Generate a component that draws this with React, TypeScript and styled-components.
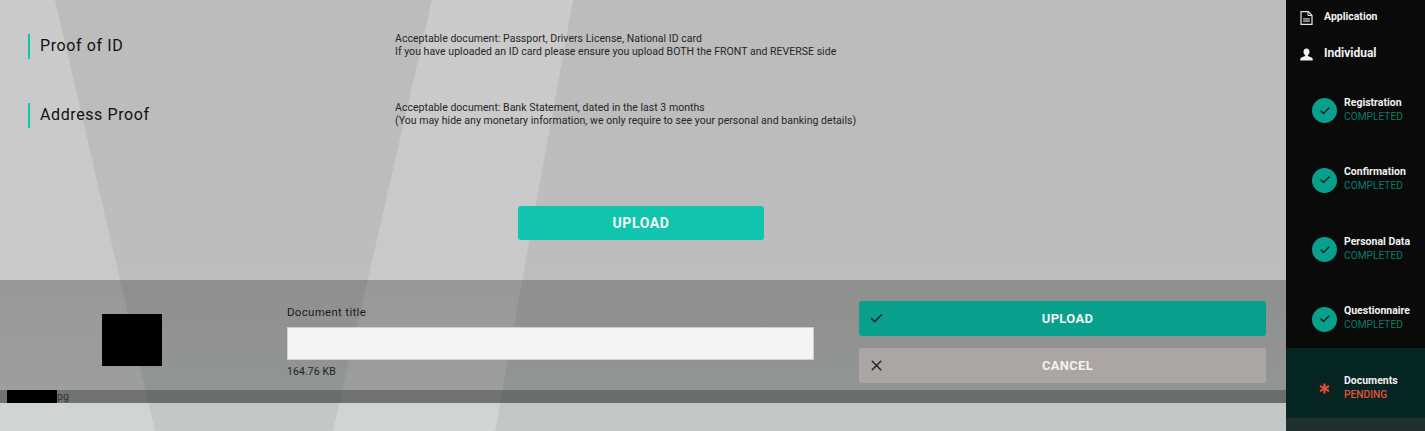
import React from "react";
import styled, { createGlobalStyle } from "styled-components";
import { Check, X, Asterisk } from "lucide-react";

const Global = createGlobalStyle`
  html, body { margin: 0; padding: 0; height: 431px; overflow: hidden; font-family: Roboto, "Liberation Sans", sans-serif; }
`;

const Page = styled.div`
  display: flex;
  width: 1425px;
  height: 431px;
  overflow: hidden;
`;

const Main = styled.main`
  position: relative;
  flex: 1;
  display: flex;
  flex-direction: column;
  background: linear-gradient(180deg, #cbcbcb 0%, #c9c9c9 62%, #d1d6d5 100%);
  overflow: hidden;
`;

const Shape = styled.div<{ $clip: string }>`
  position: absolute;
  inset: 0;
  background: linear-gradient(180deg, #bcbcbc 0%, #bdbdbd 62%, #c3c9c8 100%);
  clip-path: polygon(${(p) => p.$clip});
`;

const Content = styled.div`
  position: relative;
  display: flex;
  flex-direction: column;
  height: 100%;
`;

const Docs = styled.section`
  display: flex;
  flex-direction: column;
  gap: 44px;
  padding: 34px 0 0 28px;
`;

const DocRow = styled.div`
  display: flex;
  align-items: center;
  height: 25px;
`;

const DocTitle = styled.h2`
  width: 367px;
  margin: 0;
  padding-left: 10px;
  border-left: 2.5px solid #10c4ae;
  box-sizing: border-box;
  height: 25px;
  line-height: 23px;
  font-size: 16px;
  font-weight: 400;
  letter-spacing: 0.6px;
  color: #111;
`;

const DocNote = styled.p`
  margin: 0 0 4px;
  font-size: 10.5px;
  line-height: 13px;
  letter-spacing: 0.03px;
  color: #262626;
`;

const UploadArea = styled.div`
  display: flex;
  justify-content: center;
  padding: 78px 4px 0 0;
  height: 74px;
`;

const PrimaryButton = styled.button`
  width: 246px;
  height: 34px;
  border: 0;
  border-radius: 3px;
  background: #10c4ae;
  color: #f4f4f4;
  font: 700 14px Roboto, sans-serif;
  letter-spacing: 0.6px;
`;

const Overlay = styled.section`
  display: flex;
  flex-direction: column;
  height: 123px;
  background: rgba(20, 20, 20, 0.27);
`;

const Preview = styled.div`
  flex: 1;
  display: grid;
  grid-template-columns: 287px 527px 452px;
  align-items: start;
`;

const ThumbCell = styled.div`
  padding: 34px 0 0 102px;
`;

const Thumb = styled.div`
  width: 60px;
  height: 52px;
  background: #000;
`;

const Fields = styled.div`
  display: flex;
  flex-direction: column;
  padding-top: 25px;
`;

const FieldLabel = styled.label`
  font-size: 11.5px;
  line-height: 14px;
  letter-spacing: 0.3px;
  color: #1c1c1c;
`;

const TitleInput = styled.input`
  height: 33px;
  margin-top: 8px;
  padding: 0 8px;
  box-sizing: border-box;
  border: 1px solid #d0d0d0;
  background: #f4f4f4;
`;

const FileSize = styled.span`
  margin-top: 5px;
  font-size: 10.5px;
  line-height: 13px;
  letter-spacing: 0.1px;
  color: #222;
`;

const Actions = styled.div`
  display: flex;
  flex-direction: column;
  gap: 12px;
  padding: 21px 0 0 45px;
`;

const ActionButton = styled.button<{ $tone: "ok" | "cancel" }>`
  position: relative;
  width: 407px;
  height: 35px;
  padding: 0 0 0 10px;
  border: 0;
  border-radius: 3px;
  background: ${(p) => (p.$tone === "ok" ? "#08a08c" : "#aba6a4")};
  color: #f2f2f2;
  font: 700 13px Roboto, sans-serif;
  letter-spacing: 0.3px;
`;

const ActionIcon = styled.span`
  position: absolute;
  left: 12px;
  top: 0;
  bottom: 0;
  width: 10px;
  display: flex;
  align-items: center;
  justify-content: center;
  color: #222;

  svg { flex: none; }
`;

const FileBar = styled.div`
  display: flex;
  align-items: center;
  height: 13px;
  padding-left: 7px;
  background: rgba(40, 40, 40, 0.36);
  font-size: 10.5px;
  color: #333;
`;

const Redacted = styled.span`
  width: 50px;
  height: 13px;
  background: #000;
`;

const Sidebar = styled.aside`
  width: 139px;
  flex: none;
  display: flex;
  flex-direction: column;
  background: #0a0a0a;
  color: #f1f1f1;
`;

const TopItem = styled.div<{ $h: number; $top: number; $size: number; $iconDrop: number }>`
  display: flex;
  align-items: center;
  gap: 11px;
  box-sizing: border-box;
  height: ${(p) => p.$h}px;
  padding: ${(p) => p.$top}px 0 0 14px;
  font-size: ${(p) => p.$size}px;
  font-weight: 700;
  svg { flex: none; margin-top: ${(p) => p.$iconDrop}px; }
`;

const Step = styled.div<{ $active?: boolean }>`
  display: flex;
  align-items: center;
  gap: 7px;
  height: 69.5px;
  box-sizing: border-box;
  padding: 12px 0 0 26px;
  background: ${(p) => (p.$active ? "#062623" : "transparent")};
`;

const Steps = styled.div`
  display: flex;
  flex-direction: column;
`;

const Badge = styled.div<{ $pending?: boolean }>`
  width: 25px;
  height: 25px;
  flex: none;
  border-radius: 50%;
  display: flex;
  align-items: center;
  justify-content: center;
  background: ${(p) => (p.$pending ? "#0a2220" : "#08a08c")};
  color: ${(p) => (p.$pending ? "#e2523a" : "#08211e")};
`;

const StepText = styled.div`
  display: flex;
  flex-direction: column;
  margin-top: -3px;
`;

const StepName = styled.span`
  font-size: 10.5px;
  line-height: 14px;
  font-weight: 700;
  color: #f1f1f1;
  white-space: nowrap;
`;

const StepState = styled.span<{ $pending?: boolean }>`
  font-size: 10.2px;
  line-height: 13px;
  font-weight: ${(p) => (p.$pending ? 500 : 400)};
  color: ${(p) => (p.$pending ? "#e2523a" : "#067c6c")};
`;

const Rest = styled.div`
  flex: 1;
  background: #1f302e;
`;

const FileIcon = () => (
  <svg width="13" height="14" viewBox="0 0 13 14" fill="none" stroke="#e6e6e6" strokeWidth="1.2">
    <path d="M1 .7h7.2L12 4.4v8.9H1z" />
    <path d="M8 .9v3.6h3.8" strokeWidth="1" />
    <path d="M3.2 7.2h6.6v3.6H3.2z" fill="#bdbdbd" stroke="none" />
    <path d="M3.2 9h6.6" stroke="#0a0a0a" strokeWidth="0.8" />
  </svg>
);

const PersonIcon = () => (
  <svg width="13" height="13" viewBox="0 0 13 13" fill="#f2f2f2">
    <path d="M6.5 0.5c1.9 0 3 1.4 3 3.2 0 1.5-.7 2.8-1.6 3.4v1l3.6 1.5c.8.3 1.2.9 1.2 1.9v1H.3v-1c0-1 .4-1.6 1.2-1.9l3.6-1.5v-1C4.2 6.5 3.5 5.2 3.5 3.7c0-1.8 1.1-3.2 3-3.2z" />
  </svg>
);

const steps = [
  { name: "Registration", state: "COMPLETED" },
  { name: "Confirmation", state: "COMPLETED" },
  { name: "Personal Data", state: "COMPLETED" },
  { name: "Questionnaire", state: "COMPLETED" },
  { name: "Documents", state: "PENDING", pending: true },
];

export default function App() {
  return (
    <Page>
      <Global />
      <Main>
        <Shape $clip="55px 0, 432px 0, 333px 431px, 155px 431px" />
        <Shape $clip="573px 0, 1286px 0, 1286px 431px, 495px 431px" />
        <Content>
          <Docs>
            <DocRow>
              <DocTitle>Proof of ID</DocTitle>
              <DocNote>
                Acceptable document: Passport, Drivers License, National ID card
                <br />
                If you have uploaded an ID card please ensure you upload BOTH the FRONT and REVERSE side
              </DocNote>
            </DocRow>
            <DocRow>
              <DocTitle>Address Proof</DocTitle>
              <DocNote>
                Acceptable document: Bank Statement, dated in the last 3 months
                <br />
                (You may hide any monetary information, we only require to see your personal and banking details)
              </DocNote>
            </DocRow>
          </Docs>
          <UploadArea>
            <PrimaryButton>UPLOAD</PrimaryButton>
          </UploadArea>
          <Overlay>
            <Preview>
              <ThumbCell>
                <Thumb />
              </ThumbCell>
              <Fields>
                <FieldLabel>Document title</FieldLabel>
                <TitleInput />
                <FileSize>164.76 KB</FileSize>
              </Fields>
              <Actions>
                <ActionButton $tone="ok">
                  <ActionIcon>
                    <Check size={15} strokeWidth={2.4} />
                  </ActionIcon>
                  UPLOAD
                </ActionButton>
                <ActionButton $tone="cancel">
                  <ActionIcon>
                    <X size={17} strokeWidth={2} />
                  </ActionIcon>
                  CANCEL
                </ActionButton>
              </Actions>
            </Preview>
            <FileBar>
              <Redacted />
              pg
            </FileBar>
          </Overlay>
        </Content>
      </Main>
      <Sidebar>
        <TopItem $h={31} $top={2} $size={10.5} $iconDrop={2}>
          <FileIcon />
          Application
        </TopItem>
        <TopItem $h={39} $top={5} $size={12} $iconDrop={2}>
          <PersonIcon />
          Individual
        </TopItem>
        <Steps>
          {steps.map((s) => (
            <Step key={s.name} $active={s.pending}>
              <Badge $pending={s.pending}>
                {s.pending ? <Asterisk size={17} strokeWidth={3} /> : <Check size={12} strokeWidth={2.8} />}
              </Badge>
              <StepText>
                <StepName>{s.name}</StepName>
                <StepState $pending={s.pending}>{s.state}</StepState>
              </StepText>
            </Step>
          ))}
        </Steps>
        <Rest />
      </Sidebar>
    </Page>
  );
}
